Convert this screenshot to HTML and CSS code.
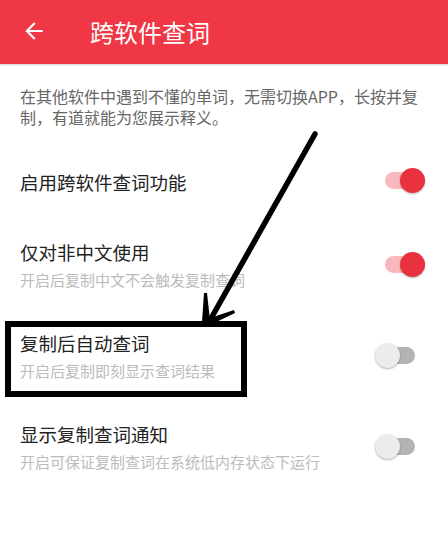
FILE: index.html
```html
<!DOCTYPE html>
<html lang="zh">
<head>
<meta charset="utf-8">
<title>跨软件查词</title>
<link rel="stylesheet" href="styles.css">
</head>
<body>
<div class="page">
  <header class="appbar">
    <svg class="back" viewBox="0 0 24 24" width="24" height="24"><path d="M20 11H7.83l5.59-5.59L12 4l-8 8 8 8 1.41-1.41L7.83 13H20v-2z" fill="#fff"/></svg>
    <h1 class="title">跨软件查词</h1>
  </header>
  <p class="desc">在其他软件中遇到不懂的单词，无需切换APP，长按并复制，有道就能为您展示释义。</p>
  <div class="row single">
    <div class="text"><div class="label">启用跨软件查词功能</div></div>
    <span class="switch on"><span class="track"></span><span class="thumb"></span></span>
  </div>
  <div class="row">
    <div class="text"><div class="label">仅对非中文使用</div><div class="sub">开启后复制中文不会触发复制查词</div></div>
    <span class="switch on"><span class="track"></span><span class="thumb"></span></span>
  </div>
  <div class="row">
    <div class="text"><div class="label">复制后自动查词</div><div class="sub">开启后复制即刻显示查词结果</div></div>
    <span class="switch off"><span class="track"></span><span class="thumb"></span></span>
  </div>
  <div class="row">
    <div class="text"><div class="label">显示复制查词通知</div><div class="sub">开启可保证复制查词在系统低内存状态下运行</div></div>
    <span class="switch off"><span class="track"></span><span class="thumb"></span></span>
  </div>

  <div class="mark-box"></div>
  <svg class="mark-arrow" viewBox="0 0 448 555" width="448" height="555">
    <line x1="315" y1="134" x2="209" y2="322" stroke="#000" stroke-width="5.5" stroke-linecap="round"/>
    <polygon points="204,293 207,293 210,320 206,327 202,322" fill="#000"/>
    <polygon points="234,310 235,313 212,324 206,327 210,318" fill="#000"/>
  </svg>
</div>
</body>
</html>
```
FILE: styles.css
```css
* { box-sizing: border-box; }
html, body { margin: 0; padding: 0; background: #fff; }
body {
  font-family: "Noto Sans CJK SC", "Noto Sans", sans-serif;
  width: 448px;
  height: 555px;
  overflow: hidden;
}
.page { position: relative; width: 448px; height: 555px; }

.appbar {
  height: 64px;
  background: #ef3745;
  display: flex;
  align-items: center;
  box-shadow: 0 1px 2px rgba(0,0,0,0.18);
}
.back { width: 26px; height: 26px; margin-left: 21px; margin-top: -2px; }
.title {
  margin: 0 0 0 43px;
  color: #fff;
  font-size: 24px;
  font-weight: 400;
  line-height: 30px;
  margin-top: -1px;
}

.desc {
  margin: 22px 20px 0 20px;
  font-size: 16px;
  line-height: 21px;
  color: #666;
}

.row {
  display: flex;
  align-items: center;
  justify-content: space-between;
  padding: 21px 0 20px 20px;
}
.row.single { margin-top: 17px; padding-top: 25px; padding-bottom: 25px; }
.label { font-size: 18.5px; line-height: 24px; color: #222; }
.sub { font-size: 15px; line-height: 20px; color: #bbb; margin-top: 6px; }

.switch { position: relative; width: 40px; height: 25px; margin-top: -1px; }
.switch.on { margin-right: 23px; }
.switch.off { margin-right: 33px; }
.track {
  position: absolute; left: 0; right: 0; top: 4px; height: 17px; border-radius: 9px;
}
.thumb {
  position: absolute; top: 0; width: 25px; height: 25px; border-radius: 50%;
  box-shadow: 0 1px 2px rgba(0,0,0,0.3);
}
.on .track { background: #f9b8be; }
.on .thumb { right: 0; background: #e8333f; }
.off .track { background: #b3b3b3; }
.off .thumb { left: 0; background: #ececec; }
.single .switch { margin-top: -3px; }

.mark-box {
  position: absolute;
  left: 5px; top: 321px;
  width: 242px; height: 76px;
  border: 6px solid #000;
}
.mark-arrow { position: absolute; left: 0; top: 0; pointer-events: none; }
```
